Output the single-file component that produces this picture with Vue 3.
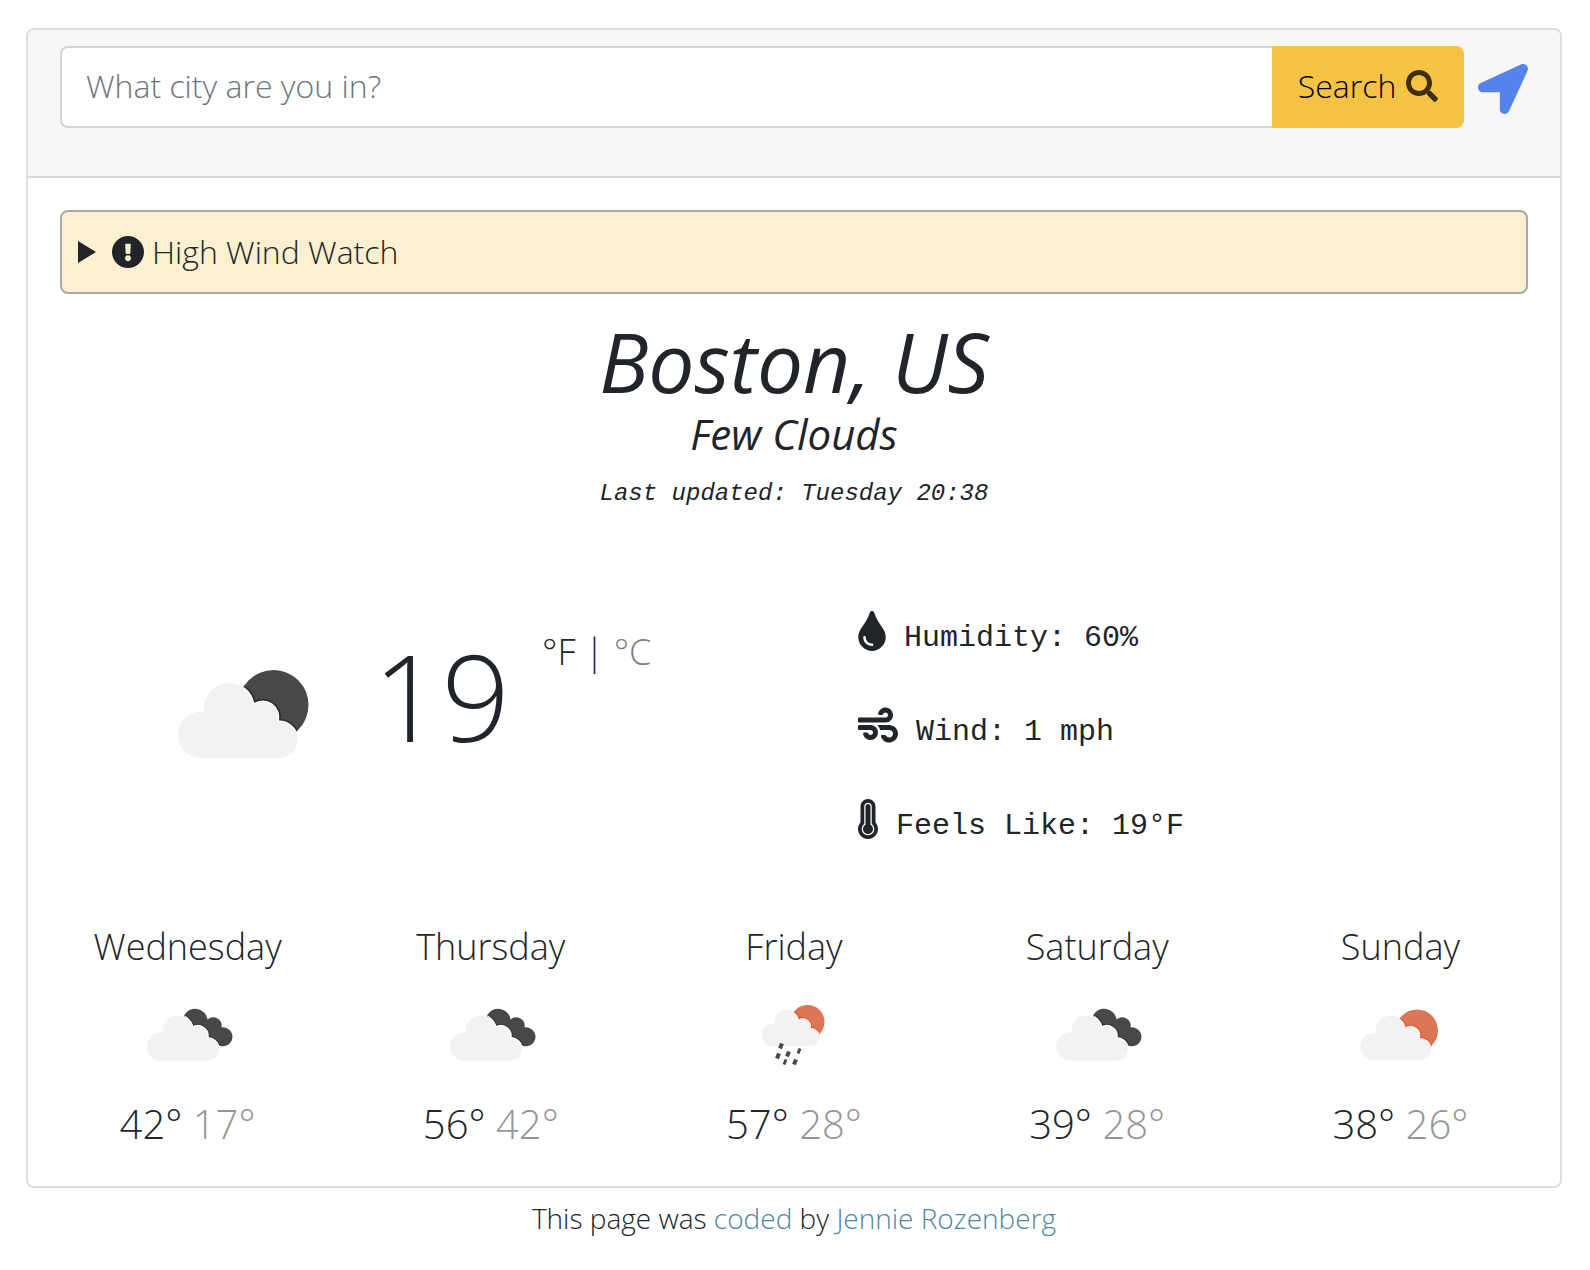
<script setup>
import { ref, computed } from 'vue'

const city = ref('')
const unit = ref('F')
const fahrenheit = 19
const temperature = computed(() =>
  unit.value === 'F' ? fahrenheit : Math.round(((fahrenheit - 32) * 5) / 9)
)

const forecast = [
  { day: 'Wednesday', icon: 'broken', max: 42, min: 17 },
  { day: 'Thursday', icon: 'broken', max: 56, min: 42 },
  { day: 'Friday', icon: 'rain', max: 57, min: 28 },
  { day: 'Saturday', icon: 'broken', max: 39, min: 28 },
  { day: 'Sunday', icon: 'few', max: 38, min: 26 }
]

const drops = [
  [37, 62], [34, 72], [44, 70], [55, 67], [41, 78], [51, 78]
]
</script>

<template>
  <svg class="defs" width="0" height="0" aria-hidden="true">
    <defs>
      <path
        id="cloud"
        d="M20 89A22.500 22.500 0 1 1 26 43A25 25 0 0 1 75.500 35.500A15.500 15.500 0 0 1 99.500 52.700A18 18 0 0 1 103 89Z"
      />
      <path
        id="backCloud"
        d="M46 31.500A12.500 12.500 0 0 1 69.500 35.500A8.500 8.500 0 0 1 83.500 43.500A9.400 9.400 0 1 1 78 59L60 54Z"
      />
      <clipPath id="moonClip"><circle cx="95.500" cy="36" r="35" /></clipPath>
      <clipPath id="backClip"><use href="#backCloud" /></clipPath>
      <clipPath id="sunClip"><circle cx="67" cy="46.500" r="21" /></clipPath>
      <clipPath id="rainSunClip"><circle cx="63.500" cy="38" r="17" /></clipPath>
    </defs>
  </svg>

  <main class="page">
    <section class="card">
      <header class="card-header">
        <form class="search" @submit.prevent>
          <input
            v-model="city"
            class="search-input"
            type="text"
            placeholder="What city are you in?"
            aria-label="City"
            autocomplete="off"
          />
          <button class="search-button" type="submit">
            Search
            <svg class="search-icon" viewBox="0 0 512 512" aria-hidden="true">
              <path d="M505 442.7L405.3 343c-4.5-4.5-10.6-7-17-7H372c27.6-35.3 44-79.7 44-128C416 93.1 322.9 0 208 0S0 93.1 0 208s93.1 208 208 208c48.3 0 92.7-16.4 128-44v16.3c0 6.4 2.5 12.500 7 17l99.7 99.7c9.4 9.4 24.6 9.4 33.9 0l28.3-28.3c9.4-9.4 9.4-24.6.1-34zM208 336c-70.7 0-128-57.2-128-128 0-70.7 57.2-128 128-128 70.7 0 128 57.2 128 128 0 70.7-57.2 128-128 128z" />
            </svg>
          </button>
          <button class="locate" type="button" aria-label="Use my location">
            <svg viewBox="0 0 512 512" aria-hidden="true">
              <path d="M444.52 3.52L28.74 195.42c-47.97 22.39-31.98 92.75 19.19 92.75h175.91v175.91c0 51.17 70.36 67.17 92.75 19.19l191.9-415.78c15.99-38.38-25.59-79.97-63.97-63.97z" />
            </svg>
          </button>
        </form>
      </header>

      <div class="card-body">
        <details class="alert">
          <summary>
            <svg class="marker" viewBox="0 0 18 22" aria-hidden="true"><path d="M0 0L18 11L0 22Z" /></svg>
            <svg class="alert-icon" viewBox="8 8 496 496" aria-hidden="true">
              <path d="M504 256c0 136.997-111.043 248-248 248S8 392.997 8 256C8 119.083 119.043 8 256 8s248 111.083 248 248zm-248 50c-25.405 0-46 20.595-46 46s20.595 46 46 46 46-20.595 46-46-20.595-46-46-46zm-43.673-165.346l7.418 136c.347 6.364 5.609 11.346 11.982 11.346h48.546c6.373 0 11.635-4.982 11.982-11.346l7.418-136c.375-6.874-5.098-12.654-11.982-12.654h-63.383c-6.884 0-12.356 5.78-11.981 12.654z" />
            </svg>
            <span>High Wind Watch</span>
          </summary>
        </details>

        <div class="overview">
          <h1>Boston, US</h1>
          <h2>Few Clouds</h2>
          <p class="updated">Last updated: Tuesday 20:38</p>
        </div>

        <div class="current">
          <div class="now">
            <svg class="now-icon" viewBox="0 0 132 92" role="img" aria-label="Few clouds">
              <circle cx="95.500" cy="36" r="35" fill="#48484a" />
              <g clip-path="url(#moonClip)" fill="none">
                <use href="#cloud" stroke="#2a2a2c" stroke-width="5" />
                <use href="#cloud" stroke="#fff" stroke-width="2" />
              </g>
              <use href="#cloud" fill="#f2f2f0" />
            </svg>
            <strong class="temperature">{{ temperature }}</strong>
            <div class="units">
              <a href="#" :class="{ active: unit === 'F' }" @click.prevent="unit = 'F'">°F</a>
              |
              <a href="#" :class="{ active: unit === 'C' }" @click.prevent="unit = 'C'">°C</a>
            </div>
          </div>

          <ul class="conditions">
            <li>
              <svg width="28" height="40" viewBox="0 0 352 512" aria-hidden="true">
                <path d="M205.22 22.09c-7.94-28.78-49.44-30.12-58.44 0C100.01 179.85 0 222.72 0 333.91 0 432.35 78.72 512 176 512s176-79.65 176-178.09c0-111.75-99.79-153.34-146.78-311.82zM176 448c-61.75 0-112-50.25-112-112 0-8.84 7.16-16 16-16s16 7.16 16 16c0 44.11 35.89 80 80 80 8.84 0 16 7.16 16 16s-7.16 16-16 16z" />
              </svg>
              Humidity: 60%
            </li>
            <li>
              <svg width="40" height="40" viewBox="0 0 512 512" aria-hidden="true">
                <path d="M156.7 256H16c-8.8 0-16 7.2-16 16v32c0 8.8 7.2 16 16 16h142.2c15.9 0 30.8 10.9 33.4 26.6 3.3 20-12.1 37.4-31.6 37.4-14.1 0-26.1-9.2-30.4-21.9-2.1-6.3-8.6-10.1-15.2-10.1H81.6c-9.8 0-17.7 8.8-15.9 18.4 8.6 44.1 47.6 77.6 94.2 77.6 57.1 0 102.7-50.1 95.2-108.6C249 291 205.4 256 156.7 256zM16 224h336c59.7 0 106.8-54.8 93.8-116.7-7.6-36.2-36.9-65.5-73.1-73.1-55.4-11.6-105.1 24.9-114.9 75.5-1.9 9.6 6.1 18.3 15.8 18.3h32.8c6.7 0 13.1-3.8 15.2-10.1C325.9 105.2 337.9 96 352 96c19.4 0 34.9 17.4 31.6 37.4-2.6 15.7-17.4 26.6-33.4 26.6H16c-8.8 0-16 7.2-16 16v32c0 8.8 7.2 16 16 16zm384 32H243.7c19.3 16.6 33.2 38.8 39.8 64H400c26.5 0 48 21.5 48 48s-21.5 48-48 48c-17.9 0-33.3-9.9-41.6-24.4-2.9-5-8.7-7.6-14.5-7.6h-33.8c-10.9 0-19 10.8-15.3 21.1 17.8 50.6 70.5 84.8 129.4 72.3 41.2-8.7 75.1-41.6 84.7-82.7C526 321.5 470.5 256 400 256z" />
              </svg>
              Wind: 1 mph
            </li>
            <li>
              <svg width="20" height="40" viewBox="0 0 256 512" aria-hidden="true">
                <path d="M224 96c0-53.019-42.981-96-96-96S32 42.981 32 96v203.347C12.225 321.756.166 351.136.002 383.333c-.359 70.303 56.787 128.176 127.089 128.664.299.002.61.003.909.003 70.698 0 128-57.304 128-128 0-32.459-12.088-62.09-32-84.653V96zm-96 368l-.576-.002c-43.86-.304-79.647-36.544-79.423-80.42.173-33.98 19.266-51.652 31.999-66.08V96c0-26.467 21.533-48 48-48s48 21.533 48 48v221.498c12.63 14.312 32 32.164 32 66.502 0 44.112-35.888 80-80 80zm64-80c0 35.346-28.654 64-64 64s-64-28.654-64-64c0-23.685 12.876-44.349 32-55.417V96c0-17.673 14.327-32 32-32s32 14.327 32 32v232.583c19.124 11.068 32 31.732 32 55.417z" />
              </svg>
              Feels Like: 19°F
            </li>
          </ul>
        </div>

        <div class="forecast">
          <article v-for="item in forecast" :key="item.day" class="day">
            <h3>{{ item.day }}</h3>
            <svg v-if="item.icon === 'broken'" viewBox="0 0 100 100" role="img" aria-label="Broken clouds">
              <use href="#backCloud" fill="#48484a" />
              <g clip-path="url(#backClip)">
                <g transform="translate(9 23) scale(.6)" fill="none">
                  <use href="#cloud" stroke="#2a2a2c" stroke-width="8" />
                  <use href="#cloud" stroke="#fff" stroke-width="5" />
                </g>
              </g>
              <use href="#cloud" transform="translate(9 23) scale(.6)" fill="#f2f2f2" />
            </svg>
            <svg v-else-if="item.icon === 'few'" viewBox="0 0 100 100" role="img" aria-label="Few clouds">
              <circle cx="67" cy="46.500" r="21" fill="#dd7655" />
              <g clip-path="url(#sunClip)">
                <g transform="translate(10.500 23.500) scale(.59)" fill="none">
                  <use href="#cloud" stroke="#e2512f" stroke-width="6" />
                  <use href="#cloud" stroke="#fff" stroke-width="2" />
                </g>
              </g>
              <use href="#cloud" transform="translate(10.500 23.500) scale(.59)" fill="#f2f2f2" />
            </svg>
            <svg v-else viewBox="0 0 100 100" role="img" aria-label="Rain">
              <circle cx="63.500" cy="38" r="17" fill="#dd7655" />
              <g clip-path="url(#rainSunClip)">
                <g transform="translate(18 19) scale(.484)" fill="none">
                  <use href="#cloud" stroke="#e2512f" stroke-width="6" />
                  <use href="#cloud" stroke="#fff" stroke-width="2" />
                </g>
              </g>
              <use href="#cloud" transform="translate(18 19) scale(.484)" fill="#f2f2f2" />
              <path
                v-for="([x, y], i) in drops"
                :key="i"
                :d="`M${x + 1} ${y - 2.5}L${x - 1} ${y + 2.5}`"
                stroke="#48484a"
                :stroke-width="i === 3 || i === 4 ? 3 : 4"
              />
            </svg>
            <p class="range">
              <span>{{ item.max }}°</span>
              <span class="low">{{ ' ' + item.min }}°</span>
            </p>
          </article>
        </div>
      </div>
    </section>

    <footer class="credit">
      This page was <a href="#">coded</a> by <a href="#">Jennie Rozenberg</a>
    </footer>
  </main>
</template>

<style>
body {
  margin: 0;
  background: #fff;
}
</style>

<style scoped>
.page {
  padding: 28px 28px 16px 26px;
  color: #212529;
  font-family: "Open Sans", sans-serif;
  font-size: 32px;
  font-weight: 300;
  line-height: 48px;
}
.page * {
  box-sizing: border-box;
}
.defs {
  position: absolute;
}
.card {
  border: 2px solid #dfdfdf;
  border-radius: 8px;
}
.card-header {
  padding: 16px 32px 48px;
  background: #f7f7f7;
  border-bottom: 2px solid #d8d8d8;
  border-radius: 6px 6px 0 0;
}
.search {
  display: flex;
  align-items: center;
}
.search-input {
  flex: 1;
  min-width: 0;
  height: 82px;
  padding: 0 24px 4px;
  border: 2px solid #ced4da;
  border-right: 0;
  border-radius: 8px 0 0 8px;
  background: #fff;
  color: #495057;
  font: inherit;
}
.search-input::placeholder {
  color: #6c757d;
  opacity: 1;
}
.search-button {
  display: flex;
  align-items: center;
  justify-content: center;
  gap: 10px;
  width: 192px;
  height: 82px;
  padding: 0 0 2px;
  border: 0;
  border-radius: 0 8px 8px 0;
  background: #f6c244;
  color: #000;
  font: inherit;
}
.search-icon {
  width: 32px;
  height: 32px;
  fill: #3d3011;
}
.locate {
  width: 50px;
  height: 50px;
  margin: 4px 0 0 14px;
  padding: 0;
  border: 0;
  background: none;
}
.locate svg {
  display: block;
  fill: #5582eb;
}
.card-body {
  padding: 32px;
}
.alert {
  border: 2px solid #a9a9a9;
  border-radius: 8px;
  background: #fdf0d1;
}
.alert summary {
  display: flex;
  align-items: center;
  padding: 16px;
  list-style: none;
}
.marker {
  width: 18px;
  height: 22px;
  margin-right: 16px;
}
.alert-icon {
  width: 32px;
  height: 32px;
  margin-right: 8px;
}
.marker,
.alert-icon,
.conditions svg {
  fill: #212529;
}
.overview {
  padding-top: 18px;
  text-align: center;
}
h1,
h2,
h3,
p,
ul {
  margin: 0;
  padding: 0;
  font-weight: inherit;
}
h1,
h2 {
  font-style: italic;
  font-weight: 400;
}
h1 {
  font-size: 82px;
  line-height: 98px;
}
h2 {
  font-size: 42px;
  line-height: 48px;
}
.updated {
  margin-top: 18px;
  font: italic 24px/36px "Liberation Mono", monospace;
}
.current {
  display: grid;
  grid-template-columns: 1fr 1fr;
  padding-top: 79px;
}
.now {
  display: flex;
  align-items: flex-start;
  padding: 40px 0 0 118px;
}
.now-icon {
  width: 132px;
  height: 92px;
  margin-top: 38px;
}
.temperature {
  margin-left: 63px;
  font-size: 120px;
  font-weight: 300;
  line-height: 130px;
}
.units {
  margin-left: 32px;
  font-size: 36px;
  line-height: 42px;
  white-space: nowrap;
}
.units a {
  color: #808080;
  text-decoration: none;
}
.units a.active {
  color: #212529;
}
.conditions {
  padding-left: 64px;
  list-style: none;
  font-family: "Liberation Mono", monospace;
  font-size: 30px;
  font-weight: 400;
}
.conditions li {
  height: 94px;
  padding-top: 20px;
}
.conditions svg {
  vertical-align: -5px;
}
.forecast {
  display: grid;
  grid-template-columns: repeat(5, 1fr);
  margin: 47px -24px 0;
  text-align: center;
}
.day h3 {
  font-size: 36px;
  line-height: 54px;
}
.day svg {
  display: block;
  width: 100px;
  height: 100px;
  margin: 10px auto;
}
.range {
  font-size: 40px;
  line-height: 60px;
}
.low {
  color: #969696;
}
.credit {
  margin-top: 6px;
  font-size: 28px;
  text-align: center;
}
.credit a {
  color: #4d87a5;
  text-decoration: none;
}
</style>
